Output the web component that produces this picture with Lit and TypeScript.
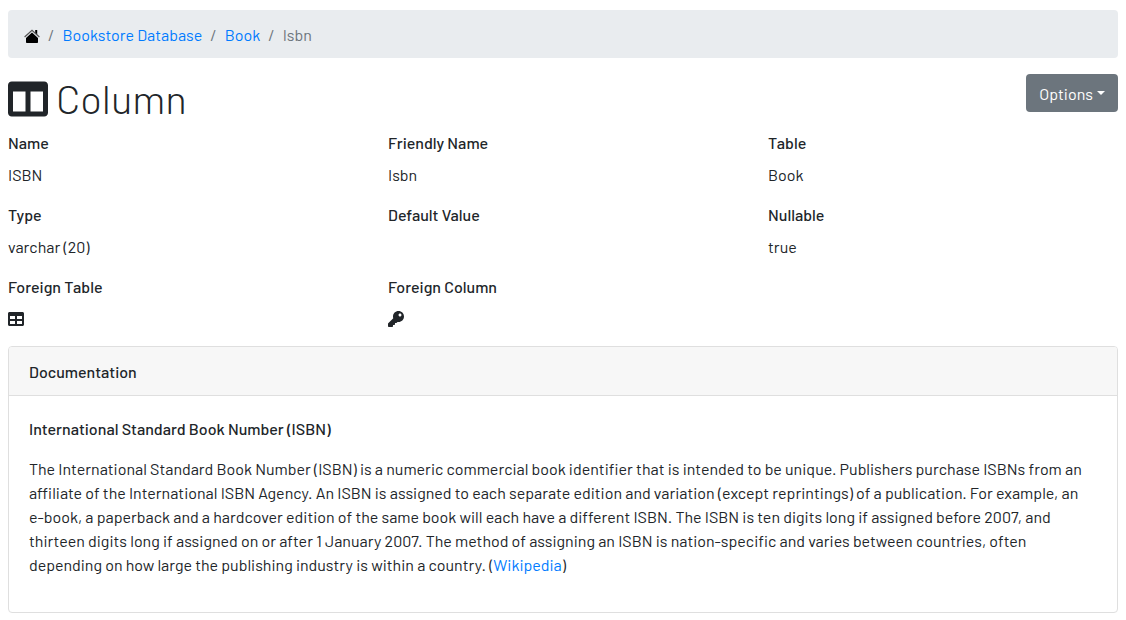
import { LitElement, html, css, svg } from "lit";
import { customElement } from "lit/decorators.js";

const FRAME =
  "M464 32H48C21.49 32 0 53.49 0 80v352c0 26.51 21.49 48 48 48h416c26.51 0 48-21.49 48-48V80c0-26.51-21.49-48-48-48z";

const ICONS = {
  columns: FRAME + "M224 416H64V160h160v256zm224 0H288V160h160v256z",
  table:
    FRAME +
    "M224 416H64v-96h160v96zm0-160H64v-96h160v96zm224 160H288v-96h160v96zm0-160H288v-96h160v96z",
  key: "M512 176.001C512 273.203 433.202 352 336 352c-11.22 0-22.19-1.062-32.827-3.069l-24.012 27.014A23.999 23.999 0 0 1 261.223 384H224v40c0 13.255-10.745 24-24 24h-40v40c0 13.255-10.745 24-24 24H24c-13.255 0-24-10.745-24-24v-78.059c0-6.365 2.529-12.47 7.029-16.971l161.802-161.802C163.108 213.814 160 195.271 160 176 160 78.798 238.797.001 335.999 0 433.488-.001 512 78.511 512 176.001zM336 128c0 26.51 21.49 48 48 48s48-21.49 48-48-21.49-48-48-48-48 21.49-48 48z",
};

const icon = (name: keyof typeof ICONS) =>
  html`<svg class="icon" viewBox="0 0 512 512" aria-hidden="true">
    ${svg`<path fill="currentColor" fill-rule="evenodd" d=${ICONS[name]}></path>`}
  </svg>`;

const FIELDS = [
  { label: "Name", value: "ISBN" },
  { label: "Friendly Name", value: "Isbn" },
  { label: "Table", value: "Book" },
  { label: "Type", value: "varchar (20)" },
  { label: "Default Value", value: "" },
  { label: "Nullable", value: "true" },
  { label: "Foreign Table", value: icon("table") },
  { label: "Foreign Column", value: icon("key") },
];

@customElement("app-root")
export class AppRoot extends LitElement {
  static styles = css`
    :host {
      display: block;
      padding: 10px 8px 7px;
      background: #fff;
      color: #212529;
      font: 400 16px/24px Barlow, Roboto, sans-serif;
    }
    * {
      box-sizing: border-box;
    }
    a {
      color: #007bff;
      text-decoration: none;
    }
    .breadcrumb {
      display: flex;
      flex-wrap: wrap;
      margin: 0 0 16px;
      padding: 13px 16px 11px;
      list-style: none;
      background: #e9ecef;
      border-radius: 4px;
      color: #6c757d;
    }
    .crumb::before {
      content: "/";
      padding: 0 8px;
    }
    .home {
      display: flex;
      align-items: flex-end;
      height: 24px;
    }
    .home svg {
      width: 16px;
      height: 16px;
      margin-bottom: 3px;
    }
    .top {
      display: flex;
      justify-content: space-between;
      align-items: flex-start;
      margin-bottom: 9px;
    }
    h1 {
      display: flex;
      align-items: flex-end;
      gap: 8px;
      margin: 0;
      font-size: 40px;
      line-height: 48px;
      font-weight: 300;
    }
    h1 .icon {
      margin-bottom: 3px;
    }
    .icon {
      display: block;
      width: 1em;
      height: 1em;
    }
    .options {
      display: flex;
      align-items: center;
      gap: 4px;
      height: 38px;
      padding: 2px 13px 0;
      border: 0;
      border-radius: 4px;
      background: #6c757d;
      color: #fff;
      font: inherit;
    }
    .caret {
      margin-bottom: 2px;
      border: 4px solid transparent;
      border-top-color: #fff;
      border-bottom: 0;
    }
    .fields {
      display: grid;
      grid-template-columns: repeat(3, 1fr);
      gap: 16px 30px;
      margin: 0 0 15px;
    }
    dt {
      margin-bottom: 8px;
      font-weight: 500;
    }
    dd {
      display: flex;
      align-items: center;
      height: 24px;
      margin: 0;
    }
    .card {
      border: 1px solid #dfdfdf;
      border-radius: 4px;
    }
    h2,
    h3 {
      margin: 0;
      font-size: 16px;
      line-height: 24px;
      font-weight: 500;
    }
    h2 {
      padding: 13px 20px 11px;
      background: #f7f7f7;
      border-bottom: 1px solid #dfdfdf;
      border-radius: 3px 3px 0 0;
    }
    .body {
      padding: 21px 20px 35px;
    }
    p {
      margin: 16px 0 0;
    }
    .nowrap {
      white-space: nowrap;
    }
  `;

  render() {
    return html`
      <nav aria-label="Breadcrumb">
        <ol class="breadcrumb">
          <li>
            <a class="home" href="#" aria-label="Home">
              <svg viewBox="0 0 16 16" aria-hidden="true">
                <path fill="#000" d="M11.200 2h2v5l-2-2zM8 4.600l6 5.400v4.200a.8.8 0 0 1-.8.8H2.800a.8.8 0 0 1-.8-.8V10z"></path>
                <path fill="none" stroke="#555" stroke-width="1.200" d="M.6 9 8 2.400 15.400 9"></path>
              </svg>
            </a>
          </li>
          <li class="crumb"><a href="#">Bookstore Database</a></li>
          <li class="crumb"><a href="#">Book</a></li>
          <li class="crumb" aria-current="page">Isbn</li>
        </ol>
      </nav>
      <header class="top">
        <h1>${icon("columns")}<span>Column</span></h1>
        <button class="options" type="button" aria-haspopup="true">
          Options<span class="caret"></span>
        </button>
      </header>
      <dl class="fields">
        ${FIELDS.map(
          (f) => html`<div><dt>${f.label}</dt><dd>${f.value}</dd></div>`
        )}
      </dl>
      <section class="card">
        <h2>Documentation</h2>
        <div class="body">
          <h3>International Standard Book Number (ISBN)</h3>
          <p>
            The International Standard Book Number (ISBN) is a numeric commercial book identifier that is intended to be unique. Publishers purchase ISBNs from an affiliate of the International ISBN Agency. An ISBN is assigned to each separate edition and variation (except reprintings) of a publication. For example, an <span class="nowrap">e-book</span>, a paperback and a hardcover edition of the same book will each have a different ISBN. The ISBN is ten digits long if assigned before 2007, and thirteen digits long if assigned on or after 1 January 2007. The method of assigning an ISBN is nation-specific and varies between countries, often depending on how large the publishing industry is within a country. (<a href="#">Wikipedia</a>)
          </p>
        </div>
      </section>
    `;
  }
}
